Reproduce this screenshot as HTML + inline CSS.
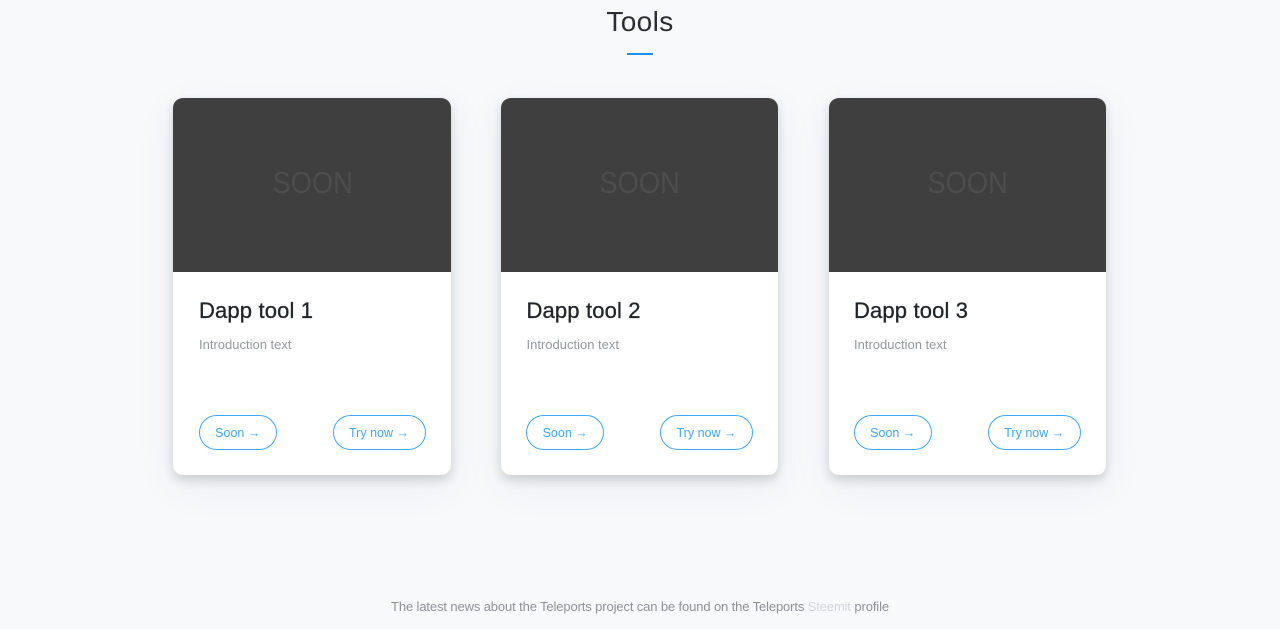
<!DOCTYPE html>
<html>
<head>
<meta charset="utf-8">
<title>Tools</title>
<style>
html,body{margin:0;padding:0;width:1280px;height:629px;overflow:hidden;background:#f8f9fb;font-family:"Liberation Sans",sans-serif}
.abs,.card,.img,.soon,h3,p,.btn{position:absolute;white-space:nowrap}
.title{left:0;width:1280px;top:4px;text-align:center;font-size:28px;line-height:36px;color:#2a2e33;letter-spacing:.4px}
.rule{left:627px;top:53px;width:26px;height:2px;background:#1c90f3}
.card{top:98px;width:277px;height:377px;background:#fff;border-radius:10px;box-shadow:0 5px 10px rgba(60,70,85,.2),0 12px 40px rgba(60,70,85,.07)}
.img{left:0;top:0;width:100%;height:174px;background:#3f3f3f;border-radius:10px 10px 0 0}
.soon{left:0;width:100%;top:66px;text-align:center;font-size:31px;line-height:38px;color:#4d4d4d}
.soon span{display:inline-block;transform:scaleX(.88)}
h3{margin:0;left:26px;top:198.5px;font-weight:400;font-size:22px;line-height:28px;color:#212529;letter-spacing:.15px;-webkit-text-stroke:.3px #212529}
p{margin:0;left:26px;top:237.5px;font-size:13px;line-height:18px;color:#94989c}
.btn{box-sizing:border-box;top:317px;height:35px;border:1px solid #3fa5f7;border-radius:18px;text-align:center;font-size:12.5px;line-height:35px;color:#3fa5f7}
.b1{left:26px;width:77.5px}
.b2{left:160px;width:93px}
.c1 .b2{left:159.5px}
.c1 .soon{left:1px}
.c2 h3,.c2 p{left:25.5px}
.c2 .b1{left:25.2px;width:78px}
.c2 .b2{left:159px}
.c3 h3,.c3 p{left:25px}
.c3 .b1{left:25px;width:77.5px}
.c3 .b2{left:159px;width:92.5px}
.foot{left:0;width:1280px;top:598px;text-align:center;font-size:13px;line-height:18px;color:#8d9196;letter-spacing:-.125px}
.foot span{color:#d2d5d9}
</style>
</head>
<body>
<div class="abs title">Tools</div>
<div class="abs rule"></div>

<div class="card c1" style="left:173px;width:278px">
<div class="img"><div class="soon"><span>SOON</span></div></div>
<h3>Dapp tool 1</h3>
<p>Introduction text</p>
<div class="btn b1">Soon →</div>
<div class="btn b2">Try now →</div>
</div>

<div class="card c2" style="left:501px">
<div class="img"><div class="soon"><span>SOON</span></div></div>
<h3>Dapp tool 2</h3>
<p>Introduction text</p>
<div class="btn b1">Soon →</div>
<div class="btn b2">Try now →</div>
</div>

<div class="card c3" style="left:829px">
<div class="img"><div class="soon"><span>SOON</span></div></div>
<h3>Dapp tool 3</h3>
<p>Introduction text</p>
<div class="btn b1">Soon →</div>
<div class="btn b2">Try now →</div>
</div>

<div class="abs foot">The latest news about the Teleports project can be found on the Teleports <span>Steemit</span> profile</div>
</body>
</html>
